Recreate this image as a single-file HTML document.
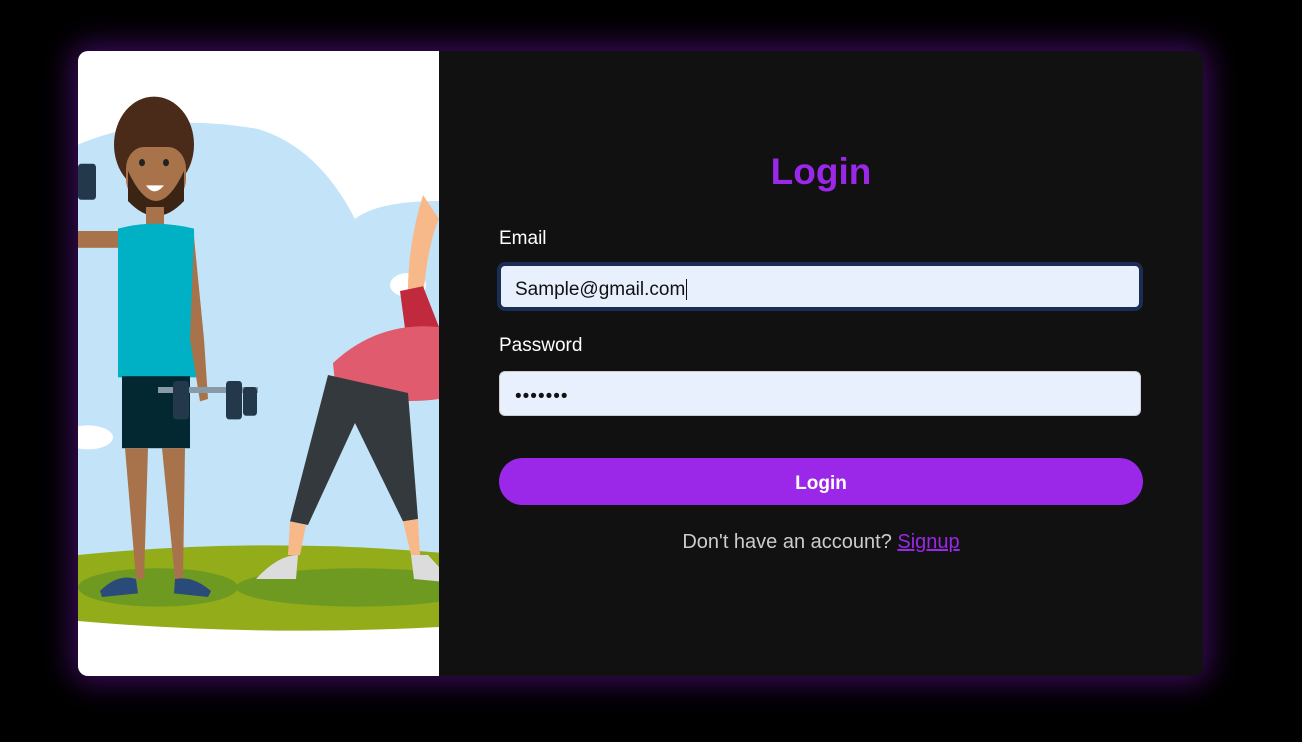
<!DOCTYPE html>
<html><head><meta charset="utf-8"><style>
html,body{margin:0;padding:0;background:#000;width:1302px;height:742px;overflow:hidden;font-family:"Segoe UI","Liberation Sans",sans-serif}
.card{position:absolute;left:78px;top:51px;width:1125px;height:625px;border-radius:10px;overflow:hidden;background:#111;box-shadow:0 0 30px 6px rgba(110,20,170,.55)}
.left{position:absolute;left:0;top:0;width:361px;height:625px;background:#fff}
.right{position:absolute;left:361px;top:0;right:0;bottom:0;background:#111}
h1{position:absolute;left:0;right:0;top:100px;margin:0;text-align:center;color:#9b27e8;font-size:37px;font-weight:bold}
.lbl{position:absolute;left:60px;color:#fff;font-size:19px}
.inp{position:absolute;left:60px;width:642px;height:45px;background:#e8f0fe;border-radius:6px;border:1px solid #ccc;box-sizing:border-box;font-size:19px;color:#111;padding-left:15px;line-height:43px}
.btn{position:absolute;left:60px;top:407px;width:644px;height:47px;border-radius:24px;background:#9b27e8;color:#fff;font-weight:bold;font-size:19px;text-align:center;line-height:51px}
.foot{position:absolute;left:0;right:0;top:480px;text-align:center;color:#ccc;font-size:20px}
.foot u{color:#9b27e8}
</style></head><body>
<div class="card">
<div class="left">
<svg width="361" height="625" viewBox="0 0 361 625">
<g transform="scale(1,1.2)">
<path d="M0 78 Q80 50 180 65 Q240 80 277 140 Q300 125 361 125 L361 440 L0 440 Z" fill="#c3e4f8"/>
<ellipse cx="330" cy="195" rx="18" ry="10" fill="#fff"/>
<ellipse cx="10" cy="322" rx="25" ry="10" fill="#fff"/>
<path d="M0 420 Q180 405 361 418 L361 480 Q180 488 0 475 Z" fill="#93ac1a"/>
<ellipse cx="80" cy="447" rx="80" ry="16" fill="#6f9a22"/>
<ellipse cx="280" cy="447" rx="122" ry="16" fill="#6f9a22"/>
<rect x="0" y="150" width="42" height="14" fill="#a8734a"/>
<rect x="0" y="94" width="18" height="30" rx="3" fill="#23384a"/>
<circle cx="76" cy="78" r="40" fill="#4a2a18"/>
<rect x="48" y="80" width="60" height="45" rx="18" fill="#a8734a"/>
<path d="M50 100 Q78 150 106 100 L106 125 Q78 150 50 125Z" fill="#3c2415"/>
<path d="M68 112 Q76 122 86 112Z" fill="#fff"/>
<circle cx="64" cy="93" r="3" fill="#222"/><circle cx="88" cy="93" r="3" fill="#222"/>
<rect x="68" y="130" width="18" height="16" fill="#a8734a"/>
<path d="M40 148 Q76 140 116 148 L118 272 L40 272Z" fill="#00b1c6"/>
<path d="M116 155 L126 240 L130 290 L122 292 L112 240Z" fill="#a8734a"/>
<rect x="44" y="271" width="68" height="60" fill="#032831"/>
<rect x="80" y="280" width="100" height="5" fill="#889aa5"/>
<rect x="95" y="275" width="16" height="32" rx="3" fill="#23384a"/>
<rect x="148" y="275" width="16" height="32" rx="3" fill="#23384a"/>
<rect x="165" y="280" width="14" height="24" rx="3" fill="#23384a"/>
<path d="M47 331 L70 331 L66 440 L58 440Z" fill="#a8734a"/>
<path d="M84 331 L107 331 L105 440 L97 440Z" fill="#a8734a"/>
<path d="M22 450 Q40 435 58 440 L60 452 L24 455Z" fill="#2a4a7a"/>
<path d="M97 440 Q115 437 133 450 L130 455 L96 452Z" fill="#2a4a7a"/>
<path d="M345 120 Q330 160 330 200 L345 205 Q350 160 361 140Z" fill="#f7b98a"/>
<path d="M322 200 L345 196 L361 230 L361 265 L330 250Z" fill="#c12a3c"/>
<path d="M255 260 Q300 225 361 230 L361 290 Q320 295 258 285Z" fill="#df5b6d"/>
<path d="M250 270 L330 285 L340 390 L325 392 L277 310 L230 395 L212 392Z" fill="#34393d"/>
<path d="M212 392 L228 395 L222 420 L210 420Z" fill="#f7b98a"/>
<path d="M325 392 L340 390 L342 420 L333 420Z" fill="#f7b98a"/>
<path d="M178 440 Q200 420 220 420 L218 440Z" fill="#dcdcdc"/>
<path d="M333 420 L350 420 L361 430 L361 442 L336 440Z" fill="#dcdcdc"/>
</g>
</svg>
</div>
<div class="right">
<h1>Login</h1>
<div class="lbl" style="top:177px">Email</div>
<div class="inp" style="top:213px;border:2px solid #1a2e55;box-shadow:0 0 0 2px #1a2e55;padding-left:14px;line-height:47px">Sample@gmail.com<span style="border-left:1px solid #111;margin-left:1px"></span></div>
<div class="lbl" style="top:284px">Password</div>
<div class="inp" style="top:320px;letter-spacing:1px;line-height:49px">•••••••</div>
<div class="btn">Login</div>
<div class="foot">Don't have an account? <u>Signup</u></div>
</div>
</div>
</body></html>
